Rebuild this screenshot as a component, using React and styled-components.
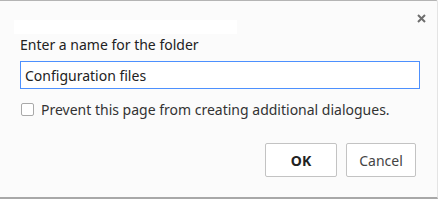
import React from "react";
import styled, { createGlobalStyle } from "styled-components";

const Global = createGlobalStyle`
  html, body { margin: 0; padding: 0; background: #fff; }
  body { font-family: "Noto Sans", "Open Sans", sans-serif; }
`;

const Dialog = styled.div`
  box-sizing: border-box;
  width: 438px;
  height: 199px;
  background: #fbfbfb;
  border-top: 1px solid #b4b4b4;
  border-bottom: 2px solid #a8a8a8;
  border-right: 1px solid #e4e4e4;
  border-top-right-radius: 2px;
  position: relative;
  display: flex;
  flex-direction: column;
  padding: 19px 19px 0 20px;
`;

const TitleMask = styled.div`
  width: 223px;
  height: 14px;
  background: #fff;
  margin-left: -6px;
`;

const Close = styled.button`
  position: absolute;
  top: 9px;
  right: 8px;
  width: 16px;
  height: 16px;
  padding: 0;
  border: none;
  background: none;
  display: flex;
  align-items: center;
  justify-content: center;
`;

const Label = styled.div`
  font-size: 14px;
  color: #222;
  margin-top: 1px;
  line-height: 19px;
`;

const Input = styled.input`
  box-sizing: border-box;
  margin-top: 7px;
  width: 400px;
  height: 28px;
  border: 1px solid #4d90fe;
  padding: 0 4px;
  font-family: inherit;
  font-size: 14px;
  color: #222;
  background: #fff;
  outline: none;
`;

const CheckRow = styled.label`
  display: flex;
  align-items: center;
  gap: 7px;
  margin-top: 11px;
  margin-left: 1px;
  font-size: 14px;
  line-height: 19px;
  color: #333;
`;

const Box = styled.span`
  box-sizing: border-box;
  width: 13px;
  height: 13px;
  border: 1px solid #a9a9a9;
  border-radius: 2px;
  background: #fff;
`;

const Buttons = styled.div`
  display: flex;
  justify-content: flex-end;
  gap: 9px;
  margin-top: 24px;
  padding-right: 2px;
`;

const Button = styled.button`
  box-sizing: border-box;
  height: 34px;
  min-width: ${(p) => (p.$primary ? "72px" : "70px")};
  border: 1px solid #c3c3c3;
  border-radius: 2px;
  background: #fff;
  font-family: inherit;
  font-size: 14px;
  font-weight: ${(p) => (p.$primary ? 700 : 400)};
  color: ${(p) => (p.$primary ? "#222" : "#444")};
`;

export default function App() {
  return (
    <>
      <Global />
      <Dialog>
        <TitleMask />
        <Close aria-label="Close">
          <svg width="9" height="9" viewBox="0 0 9 9">
            <path d="M1 1L8 8M8 1L1 8" stroke="#6e6e6e" strokeWidth="2" />
          </svg>
        </Close>
        <Label>Enter a name for the folder</Label>
        <Input defaultValue="Configuration files" />
        <CheckRow>
          <Box />
          Prevent this page from creating additional dialogues.
        </CheckRow>
        <Buttons>
          <Button $primary>OK</Button>
          <Button>Cancel</Button>
        </Buttons>
      </Dialog>
    </>
  );
}
